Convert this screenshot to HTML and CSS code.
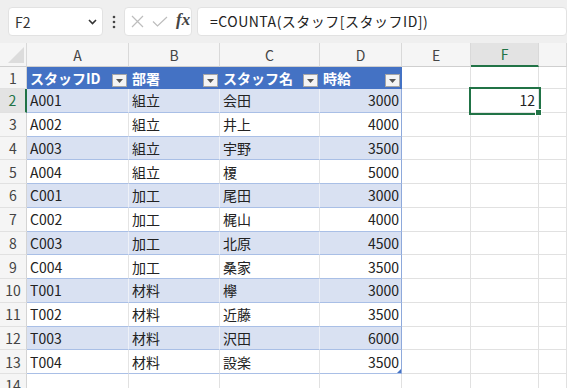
FILE: index.html
```html
<!DOCTYPE html>
<html lang="ja">
<head>
   <meta charset="UTF-8">
   <title>スタッフ</title>
   <link rel="stylesheet" href="styles.css">
</head>
<body>
   <div class="topbar">
      <div class="namebox">
         <span>F2</span>
         <svg width="9" height="6" viewBox="0 0 9 6"><polyline points="1,1 4.5,4.5 8,1" fill="none" stroke="#333" stroke-width="1.6"/></svg>
      </div>
      <div class="dots">
         <svg width="4" height="14" viewBox="0 0 4 14"><circle cx="2" cy="2" r="1.3" fill="#444"/><circle cx="2" cy="7" r="1.3" fill="#444"/><circle cx="2" cy="12" r="1.3" fill="#444"/></svg>
      </div>
      <div class="buttons">
         <svg width="13" height="13" viewBox="0 0 13 13"><path d="M1 1 L12 12 M12 1 L1 12" stroke="#bdbdbd" stroke-width="1.2"/></svg>
         <svg width="16" height="11" viewBox="0 0 16 11"><polyline points="1,5.5 5.5,10 15,1" fill="none" stroke="#bdbdbd" stroke-width="1.2"/></svg>
         <span class="fx">fx</span>
      </div>
      <div class="formula">=COUNTA(スタッフ[スタッフID])</div>
   </div>

   <div class="sheet">
      <div class="row head">
         <div class="corner">
            <svg width="26" height="23" viewBox="0 0 26 23"><polygon points="8,20 24,20 24,4" fill="#dcdcdc"/></svg>
         </div>
         <div>A</div><div>B</div><div>C</div><div>D</div><div>E</div><div class="on">F</div><div></div>
      </div>

      <div class="row first">
         <div class="num">1</div>
         <div class="th">スタッフID<span class="filter"><svg width="7" height="4" viewBox="0 0 7 4"><polygon points="0,0 7,0 3.5,4" fill="#555"/></svg></span></div>
         <div class="th">部署<span class="filter"><svg width="7" height="4" viewBox="0 0 7 4"><polygon points="0,0 7,0 3.5,4" fill="#555"/></svg></span></div>
         <div class="th">スタッフ名<span class="filter"><svg width="7" height="4" viewBox="0 0 7 4"><polygon points="0,0 7,0 3.5,4" fill="#555"/></svg></span></div>
         <div class="th">時給<span class="filter"><svg width="7" height="4" viewBox="0 0 7 4"><polygon points="0,0 7,0 3.5,4" fill="#555"/></svg></span></div>
         <div></div><div></div><div></div>
      </div>

      <div class="row band">
         <div class="num on">2</div>
         <div class="t">A001</div><div class="t">組立</div><div class="t">会田</div><div class="t r end">3000</div>
         <div></div><div class="sel">12</div><div></div>
      </div>
      <div class="row">
         <div class="num">3</div>
         <div class="t">A002</div><div class="t">組立</div><div class="t">井上</div><div class="t r end">4000</div>
         <div></div><div></div><div></div>
      </div>
      <div class="row band">
         <div class="num">4</div>
         <div class="t">A003</div><div class="t">組立</div><div class="t">宇野</div><div class="t r end">3500</div>
         <div></div><div></div><div></div>
      </div>
      <div class="row">
         <div class="num">5</div>
         <div class="t">A004</div><div class="t">組立</div><div class="t">榎</div><div class="t r end">5000</div>
         <div></div><div></div><div></div>
      </div>
      <div class="row band">
         <div class="num">6</div>
         <div class="t">C001</div><div class="t">加工</div><div class="t">尾田</div><div class="t r end">3000</div>
         <div></div><div></div><div></div>
      </div>
      <div class="row">
         <div class="num">7</div>
         <div class="t">C002</div><div class="t">加工</div><div class="t">梶山</div><div class="t r end">4000</div>
         <div></div><div></div><div></div>
      </div>
      <div class="row band">
         <div class="num">8</div>
         <div class="t">C003</div><div class="t">加工</div><div class="t">北原</div><div class="t r end">4500</div>
         <div></div><div></div><div></div>
      </div>
      <div class="row">
         <div class="num">9</div>
         <div class="t">C004</div><div class="t">加工</div><div class="t">桑家</div><div class="t r end">3500</div>
         <div></div><div></div><div></div>
      </div>
      <div class="row band">
         <div class="num">10</div>
         <div class="t">T001</div><div class="t">材料</div><div class="t">欅</div><div class="t r end">3000</div>
         <div></div><div></div><div></div>
      </div>
      <div class="row">
         <div class="num">11</div>
         <div class="t">T002</div><div class="t">材料</div><div class="t">近藤</div><div class="t r end">3500</div>
         <div></div><div></div><div></div>
      </div>
      <div class="row band">
         <div class="num">12</div>
         <div class="t">T003</div><div class="t">材料</div><div class="t">沢田</div><div class="t r end">6000</div>
         <div></div><div></div><div></div>
      </div>
      <div class="row">
         <div class="num">13</div>
         <div class="t">T004</div><div class="t">材料</div><div class="t">設楽</div><div class="t r end last">3500</div>
         <div></div><div></div><div></div>
      </div>
      <div class="row">
         <div class="num">14</div>
         <div></div><div></div><div></div><div></div>
         <div></div><div></div><div></div>
      </div>
   </div>
</body>
</html>
```

FILE: styles.css
```css
body {
   margin: 0;
   font-family: "Noto Sans CJK JP", "Noto Sans", sans-serif;
   font-size: 14px;
   color: #222;
   background-color: #fff;
   overflow: hidden;
}

/* formula bar */
.topbar {
   display: flex;
   align-items: flex-start;
   height: 43px;
   padding: 7px 0 0 8px;
   box-sizing: border-box;
   background-color: #efefef;
}

.namebox,
.buttons,
.formula {
   height: 29px;
   box-sizing: border-box;
   background-color: #fff;
   border: 1px solid #e2e2e2;
   border-radius: 4px;
}

.namebox {
   width: 95px;
   display: flex;
   align-items: center;
   justify-content: space-between;
   padding: 0 5px 0 6px;
   color: #333;
}

.dots {
   width: 21px;
   display: flex;
   justify-content: center;
   padding-top: 8px;
}

.buttons {
   width: 68px;
   display: flex;
   align-items: center;
   gap: 8px;
   padding-left: 6px;
}

.fx {
   font-family: "Liberation Serif", serif;
   font-style: italic;
   font-weight: bold;
   font-size: 17px;
   color: #444;
   margin-top: -3px;
}

.formula {
   flex: 1;
   margin-left: 5px;
   padding-left: 12px;
   line-height: 26px;
   letter-spacing: 0.5px;
   color: #222;
}

/* grid */
.row {
   display: grid;
   grid-template-columns: 27px 102px 91px 100px 82px 69px 68px 1fr;
   height: 23.75px;
}

.row > div {
   display: flex;
   align-items: center;
   box-sizing: border-box;
   padding: 0 3px;
   border-right: 1px solid #e1e1e1;
   border-bottom: 1px solid #e1e1e1;
   white-space: nowrap;
   overflow: hidden;
}

.head {
   height: 24px;
}

.head > div {
   justify-content: center;
   background-color: #f5f5f5;
   color: #444;
   border-right-color: #d9d9d9;
   border-bottom-color: #cfcfcf;
}

.head > .corner {
   padding: 0;
   align-items: flex-start;
   justify-content: flex-start;
}

.head > .on {
   background-color: #e3e3e3;
   color: #217346;
   border-bottom: 2px solid #217346;
}

.first {
   height: 22px;
}

.row > .num {
   justify-content: center;
   padding: 0;
   background-color: #f5f5f5;
   color: #444;
   border-right-color: #d4d4d4;
}

.row > .num.on {
   background-color: #e3e3e3;
   color: #217346;
   border-right: 2px solid #217346;
}

/* table */
.row > .th {
   justify-content: space-between;
   padding-right: 1px;
   background-color: #4472c4;
   color: #fff;
   font-weight: bold;
   border-right-color: #4472c4;
   border-bottom-color: #4472c4;
}

.filter {
   align-self: flex-end;
   display: flex;
   align-items: center;
   justify-content: center;
   width: 15px;
   height: 13px;
   margin-bottom: 1px;
   box-sizing: border-box;
   background-color: #f4f4f4;
   border: 1px solid #a6a6a6;
}

.row > .t {
   border-right-color: #e4e4e4;
   border-bottom-color: #a9bfe6;
}

.band > .t {
   background-color: #d9e1f2;
   border-right-color: #eef1f8;
}

.row > .r {
   justify-content: flex-end;
   padding-right: 2px;
}

.row > .end {
   border-right-color: #8ea9db;
}

.last {
   position: relative;
}

.last::after {
   content: "";
   position: absolute;
   right: 0;
   bottom: 0;
   border-left: 4px solid transparent;
   border-bottom: 4px solid #4472c4;
}

/* selected cell */
.row > .sel {
   position: relative;
   justify-content: flex-end;
   padding-right: 3px;
   outline: 2px solid #217346;
   outline-offset: 0;
   z-index: 1;
   overflow: visible;
}

.sel::after {
   content: "";
   position: absolute;
   right: -4px;
   bottom: -4px;
   width: 5px;
   height: 5px;
   background-color: #217346;
   border: 1px solid #fff;
}
```
